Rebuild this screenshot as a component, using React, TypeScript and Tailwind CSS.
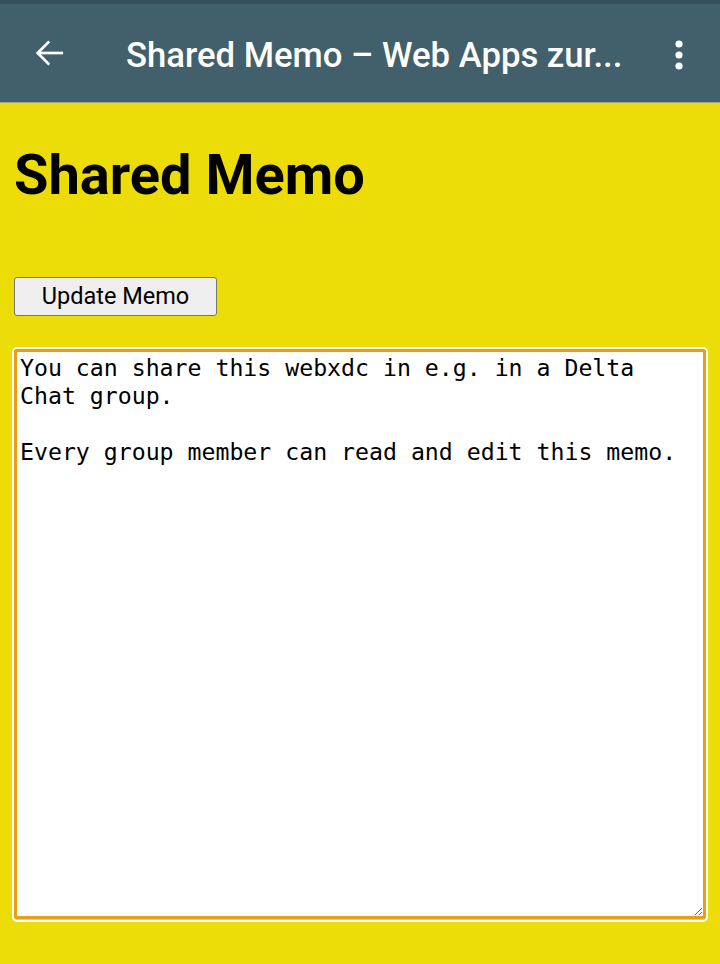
import { useState } from 'react';

export default function App() {
  const [memo, setMemo] = useState(
    'You can share this webxdc in e.g. in a Delta Chat group.\n\nEvery group member can read and edit this memo.'
  );

  return (
    <div className="min-h-screen bg-[#ecdc07] font-['Roboto',sans-serif] flex flex-col">
      <div className="h-[4px] bg-[#36505b]" />
      <header className="h-[99px] bg-[#42606b] flex items-center text-white border-b border-[#9aa58a]">
        <div className="w-[126px] pl-[32px] flex items-center">
          <svg width="34" height="34" viewBox="0 0 24 24" fill="none" stroke="white" strokeWidth="1.9" strokeLinecap="square">
            <path d="M21 12H4.5" />
            <path d="M11.5 4.5 4 12l7.5 7.5" />
          </svg>
        </div>
        <div className="flex-1 pt-[4px] text-[34.7px] font-medium leading-none whitespace-nowrap">
          Shared Memo – Web Apps zur...
        </div>
        <div className="w-[78px] flex justify-center pr-[4px] pt-[3px]">
          <svg width="8" height="30" viewBox="0 0 8 30" fill="white">
            <circle cx="4" cy="4" r="3.6" />
            <circle cx="4" cy="15" r="3.6" />
            <circle cx="4" cy="26" r="3.6" />
          </svg>
        </div>
      </header>

      <main className="px-[14px] flex flex-col flex-1 pb-[42px]">
        <h1 className="mt-[38px] text-[56px] leading-[68px] font-bold text-black">Shared Memo</h1>

        <div className="mt-[68px]">
          <button className="w-[203px] h-[39px] bg-[#efefef] border border-[#767676] rounded-[3px] text-[23.5px] text-black leading-none">
            Update Memo
          </button>
        </div>

        <div className="mt-[31px] -mx-[2px] flex flex-1">
          <div className="flex-1 flex border-2 border-white rounded-[5px]">
            <textarea
              value={memo}
              onChange={(e) => setMemo(e.target.value)}
              className="flex-1 h-[570px] bg-white border-[3px] border-[#e99f13] rounded-[3px] px-[3px] pt-[2px] font-['DejaVu_Sans_Mono',monospace] text-[23.2px] leading-[28px] text-black outline-none resize"
            />
          </div>
        </div>
      </main>
    </div>
  );
}
